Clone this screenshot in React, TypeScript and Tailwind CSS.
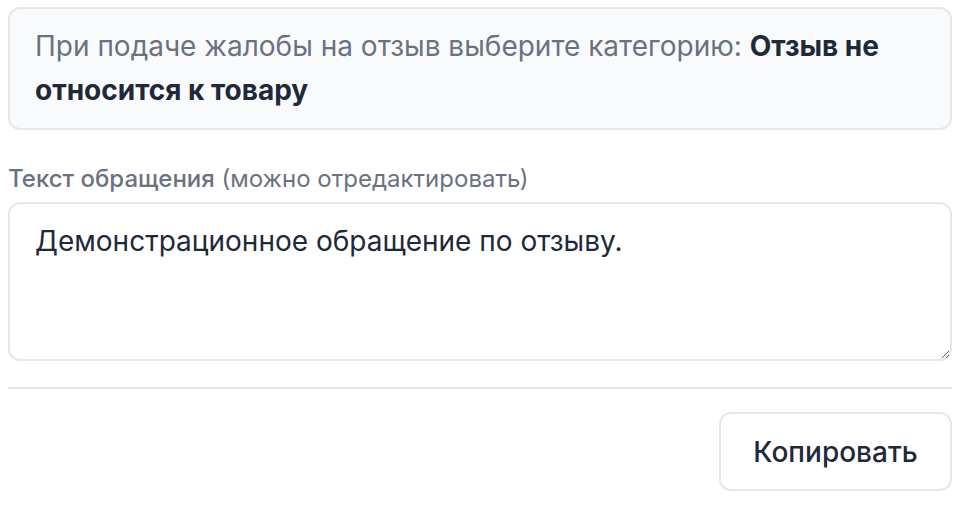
export default function App() {
  return (
    <div
      className="w-[960px] h-[512px] bg-white px-2 pt-[7px]"
      style={{ fontFamily: "Inter, 'Noto Sans', sans-serif" }}
    >
      {/* hint box */}
      <div className="rounded-xl border-2 border-gray-200 bg-gray-50 px-[25px] pt-[15px] pb-[16px] text-[28px] leading-[44px] text-gray-500">
        При подаче жалобы на отзыв выберите категорию:{" "}
        <span className="font-bold text-gray-800">Отзыв не относится к товару</span>
      </div>

      {/* label */}
      <div className="mt-[33px] text-[24px] leading-[32px] text-gray-500">
        <span className="font-medium">Текст обращения</span> (можно отредактировать)
      </div>

      <textarea
        className="mt-[7px] block h-[159px] w-full rounded-xl border-2 border-gray-200 bg-white px-[25px] pt-[15px] pb-[14px] text-[28px] leading-[44px] text-gray-800 outline-none"
        defaultValue="Демонстрационное обращение по отзыву."
      />

      <div className="mt-[26px] h-[2px] w-full bg-gray-200" />

      <div className="mt-[23px] flex justify-end">
        <button className="h-[79px] w-[233px] rounded-xl border-2 border-gray-200 bg-white text-[28px] font-medium text-gray-800">
          Копировать
        </button>
      </div>
    </div>
  );
}
